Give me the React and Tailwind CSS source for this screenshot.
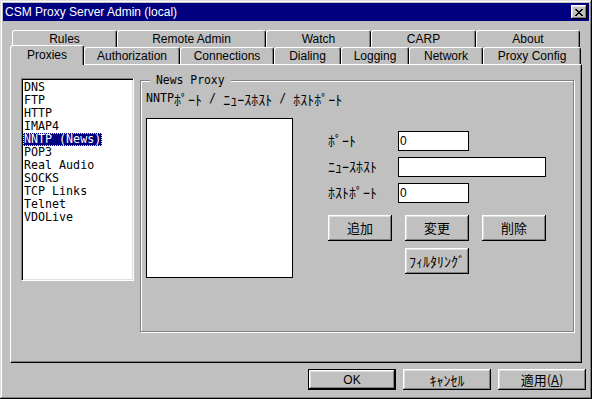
import React from 'react';

const raised = "shadow-[inset_-1px_-1px_#000,inset_1px_1px_#fff,inset_-2px_-2px_#808080,inset_2px_2px_#dfdfdf]";

// half-width katakana, 7px per char like the old system font
function Hw({ children }) {
    return <span className="font-['Noto_Sans_CJK_JP',sans-serif] text-[14px] leading-none">{children}</span>;
}

function Tab({ label, w, selected = false }) {
    return (
        <div
            className={`${w} flex items-center justify-center border-l border-t border-white border-r border-r-black rounded-t-[3px] shadow-[inset_-1px_0_#808080] text-[12px] text-black bg-[#c0c0c0] ${
                selected ? 'h-[20px] -mt-[2px] pb-[2px] relative z-10' : 'h-full'
            }`}
        >
            {label}
        </div>
    );
}

function Button({ children, w = 'w-[64px]', h = 'h-[26px]' }) {
    return (
        <button className={`${w} ${h} ${raised} bg-[#c0c0c0] flex items-center justify-center text-black`}>
            {children}
        </button>
    );
}

function Field({ label, w, value }) {
    return (
        <div className="flex items-center h-[20px]">
            <div className="w-[70px] text-black">
                <Hw>{label}</Hw>
            </div>
            <div className={`${w} h-[20px] bg-white border border-black flex items-center pl-[1px] text-[12px] font-['Liberation_Sans',sans-serif]`}>
                {value}
            </div>
        </div>
    );
}

const protocols = ['DNS', 'FTP', 'HTTP', 'IMAP4', 'NNTP (News)', 'POP3', 'Real Audio', 'SOCKS', 'TCP Links', 'Telnet', 'VDOLive'];

export default function App() {
    return (
        <div className="w-[592px] h-[399px] bg-[#c0c0c0] p-[3px] font-['Liberation_Sans','Noto_Sans_CJK_JP',sans-serif] shadow-[inset_-1px_-1px_#000,inset_1px_1px_#dfdfdf,inset_-2px_-2px_#808080,inset_2px_2px_#fff] overflow-hidden">
            {/* Title bar */}
            <div className="h-[18px] bg-[#000080] flex items-center justify-between pl-[2px] pr-[2px]">
                <span className="text-white text-[12px] leading-none">CSM Proxy Server Admin (local)</span>
                <button className={`w-[16px] h-[14px] bg-[#c0c0c0] ${raised} flex items-center justify-center`}>
                    <svg width="8" height="7" viewBox="0 0 8 7" shapeRendering="crispEdges" className="mt-[1px] -ml-[1px]">
                        <rect x="0" y="0" width="2" height="1" />
                        <rect x="6" y="0" width="2" height="1" />
                        <rect x="1" y="1" width="2" height="1" />
                        <rect x="5" y="1" width="2" height="1" />
                        <rect x="2" y="2" width="4" height="1" />
                        <rect x="3" y="3" width="2" height="1" />
                        <rect x="2" y="4" width="4" height="1" />
                        <rect x="1" y="5" width="2" height="1" />
                        <rect x="5" y="5" width="2" height="1" />
                        <rect x="0" y="6" width="2" height="1" />
                        <rect x="6" y="6" width="2" height="1" />
                    </svg>
                </button>
            </div>

            <div className="pl-[7px] mt-[9px]">
                {/* Back tab row */}
                <div className="flex h-[17px] ml-[2px]">
                    <Tab label="Rules" w="w-[105px]" />
                    <Tab label="Remote Admin" w="w-[149px]" />
                    <Tab label="Watch" w="w-[105px]" />
                    <Tab label="CARP" w="w-[105px]" />
                    <Tab label="About" w="w-[104px]" />
                </div>
                {/* Front tab row */}
                <div className="flex h-[17px]">
                    <Tab label="Proxies" w="w-[74px]" selected />
                    <Tab label="Authorization" w="w-[96px]" />
                    <Tab label="Connections" w="w-[94px]" />
                    <Tab label="Dialing" w="w-[67px]" />
                    <Tab label="Logging" w="w-[68px]" />
                    <Tab label="Network" w="w-[74px]" />
                    <Tab label="Proxy Config" w="w-[98px]" />
                </div>

                {/* Tab panel */}
                <div className="w-[572px] h-[299px] border border-white border-r-black border-b-black shadow-[inset_-1px_-1px_#808080] flex items-start">
                    {/* Protocol list */}
                    <div className="ml-[10px] mt-[13px] w-[113px] h-[203px] bg-white border border-t-[#808080] border-l-[#808080] border-b-white border-r-white shadow-[inset_1px_1px_#000,inset_-1px_-1px_#dfdfdf] pt-[2px] pl-[1px]">
                        {protocols.map((p) => (
                            <div key={p} className="h-[13px] flex items-center font-['DejaVu_Sans_Mono',monospace] text-[11.67px] leading-none">
                                {p === 'NNTP (News)' ? (
                                    <span className="bg-[#000080] text-white h-[13px] px-[1px] flex items-center outline-1 outline-dotted outline-[#ffff00] -outline-offset-1">
                                        {p}
                                    </span>
                                ) : (
                                    <span className="px-[1px] text-black">{p}</span>
                                )}
                            </div>
                        ))}
                    </div>

                    {/* News Proxy group */}
                    <div className="relative ml-[6px] mt-[15px] w-[434px] h-[252px] border border-[#808080] shadow-[1px_1px_0_#fff,inset_1px_1px_0_#fff] pl-[5px]">
                        <span className="absolute -top-[8px] left-[9px] px-[6px] bg-[#c0c0c0] font-['DejaVu_Sans_Mono',monospace] text-[11.4px] leading-[14px] text-black">
                            News Proxy
                        </span>
                        <div className="mt-[11px] h-[14px] flex items-center text-black font-['DejaVu_Sans_Mono',monospace] text-[11.67px]">
                            NNTP<Hw>ﾎﾟｰﾄ</Hw>&nbsp;/&nbsp;<Hw>ﾆｭｰｽﾎｽﾄ</Hw>&nbsp;/&nbsp;<Hw>ﾎｽﾄﾎﾟｰﾄ</Hw>
                        </div>
                        <div className="flex mt-[12px]">
                            <div className="w-[147px] h-[160px] bg-white border border-black" />
                            <div className="ml-[35px] mt-[13px] flex flex-col">
                                <div className="flex flex-col gap-[6px]">
                                    <Field label="ﾎﾟｰﾄ" w="w-[71px]" value="0" />
                                    <Field label="ﾆｭｰｽﾎｽﾄ" w="w-[148px]" value="" />
                                    <Field label="ﾎｽﾄﾎﾟｰﾄ" w="w-[71px]" value="0" />
                                </div>
                                <div className="flex gap-[13px] mt-[12px] text-[13px] font-['Noto_Sans_CJK_JP',sans-serif]">
                                    <Button>追加</Button>
                                    <Button>変更</Button>
                                    <Button>削除</Button>
                                </div>
                                <div className="ml-[77px] mt-[7px]">
                                    <Button>
                                        <Hw>ﾌｨﾙﾀﾘﾝｸﾞ</Hw>
                                    </Button>
                                </div>
                            </div>
                        </div>
                    </div>
                </div>
            </div>

            {/* Dialog buttons */}
            <div className="flex justify-end gap-[7px] pr-[3px] mt-[6px] text-[12px]">
                <div className="border border-black">
                    <Button w="w-[86px]" h="h-[19px]">OK</Button>
                </div>
                <Button w="w-[88px]" h="h-[21px]">
                    <Hw>ｷｬﾝｾﾙ</Hw>
                </Button>
                <Button w="w-[88px]" h="h-[21px]">
                    <span className="font-['Noto_Sans_CJK_JP',sans-serif] text-[13px]">適用(<span className="underline">A</span>)</span>
                </Button>
            </div>
        </div>
    );
}
